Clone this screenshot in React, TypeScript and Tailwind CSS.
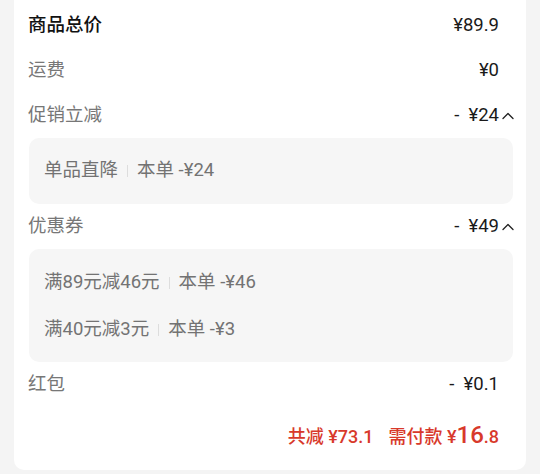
import React from "react";

const font = { fontFamily: '"Roboto", "Noto Sans CJK SC", sans-serif' };

function ChevronUp() {
  return (
    <svg width="14" height="10" viewBox="0 0 14 10" className="ml-[2px]" fill="none">
      <path d="M2 7.5 L7 2.5 L12 7.5" stroke="#222" strokeWidth="1.3" strokeLinecap="round" strokeLinejoin="round" />
    </svg>
  );
}

function Row({
  label,
  value,
  strong = false,
  open = false,
}: {
  label: string;
  value: string;
  strong?: boolean;
  open?: boolean;
}) {
  return (
    <div className="flex h-[45px] items-center justify-between pr-[13px]">
      <span className={strong ? "text-[18.5px] font-medium text-[#111]" : "text-[18.5px] text-[#777]"}>{label}</span>
      <span className={open ? "mr-[-16px] flex items-center" : "flex items-center"}>
        <span className="whitespace-pre text-[18.5px] text-[#1a1a1a]">{value}</span>
        {open && <ChevronUp />}
      </span>
    </div>
  );
}

function Detail({ name, amount }: { name: string; amount: string }) {
  return (
    <div className="flex items-center text-[18.5px] text-[#737373]">
      <span>{name}</span>
      <span className="mx-[9px] h-[12px] w-px bg-[#dddddd]" />
      <span>本单 -{amount}</span>
    </div>
  );
}

export default function App() {
  return (
    <div className="min-h-[474px] w-[540px] bg-[#f4f4f4] px-[14px]" style={font}>
      <div className="rounded-b-[10px] bg-white px-[14px] pb-[11px] pt-[3px]">
        <Row label="商品总价" value="¥89.9" strong />
        <Row label="运费" value="¥0" />
        <Row label="促销立减" value="-  ¥24" open />
        <div className="ml-[1px] mr-[-1px] rounded-[10px] bg-[#f6f6f6] px-[15px] py-[10px]">
          <div className="flex h-[46px] items-center">
            <Detail name="单品直降" amount="¥24" />
          </div>
        </div>
        <Row label="优惠券" value="-  ¥49" open />
        <div className="ml-[1px] mr-[-1px] rounded-[10px] bg-[#f6f6f6] px-[15px] pb-[9px] pt-[10px]">
          <div className="flex h-[47px] items-center">
            <Detail name="满89元减46元" amount="¥46" />
          </div>
          <div className="flex h-[47px] items-center">
            <Detail name="满40元减3元" amount="¥3" />
          </div>
        </div>
        <Row label="红包" value="-  ¥0.1" />
        <div className="mt-[6px] flex h-[46px] items-baseline justify-end pr-[13px] pt-[10px] font-medium text-[#d8392b]">
          <span className="text-[18px]">共减 ¥73.1</span>
          <span className="ml-[15px] text-[18px]">需付款 ¥</span>
          <span className="text-[24px] leading-none">16</span>
          <span className="text-[18px]">.8</span>
        </div>
      </div>
    </div>
  );
}
